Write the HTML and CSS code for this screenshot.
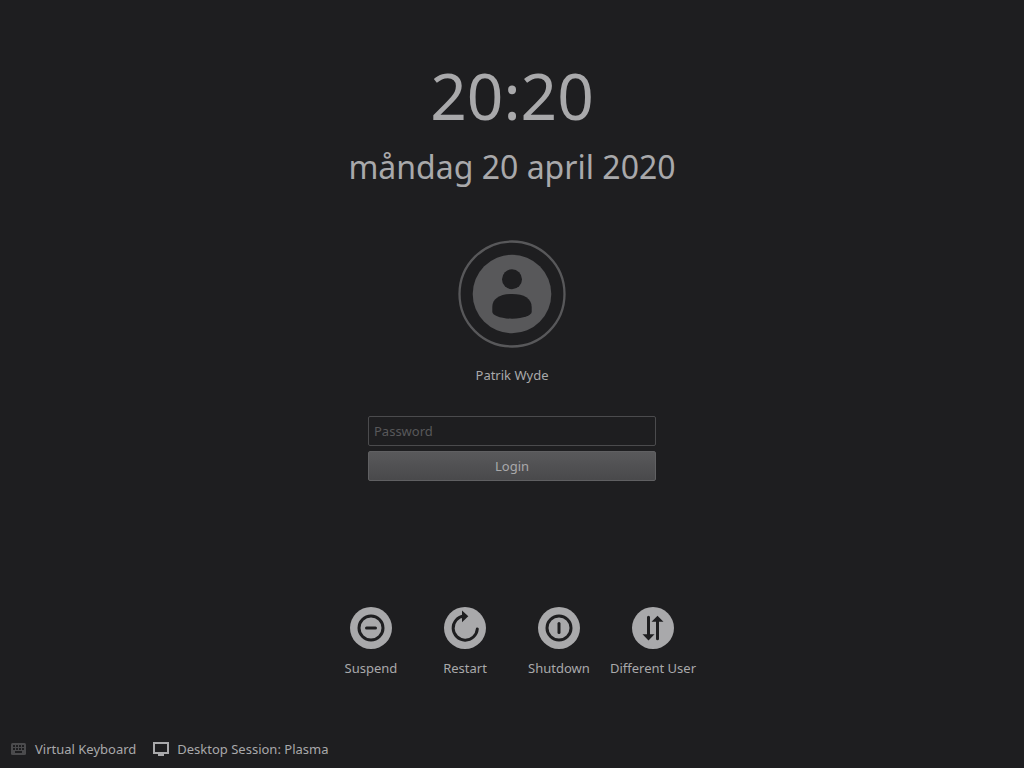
FILE: index.html
```html
<!DOCTYPE html>
<html lang="sv">
<head>
<meta charset="utf-8">
<title>Login</title>
<meta name="viewport" content="width=device-width, initial-scale=1">
<link rel="stylesheet" href="styles.css">
</head>
<body>
<div class="screen">
  <header class="clock">
    <time class="clock-time" datetime="20:20">20:20</time>
    <time class="clock-date" datetime="2020-04-20">måndag 20 april 2020</time>
  </header>

  <main class="login">
    <svg class="avatar" viewBox="0 0 108 108" aria-hidden="true">
      <circle class="avatar-ring" cx="54" cy="54" r="52.5"/>
      <circle class="avatar-disc" cx="54" cy="54" r="39.3"/>
      <circle class="cutout" cx="54" cy="39.2" r="10"/>
      <path class="cutout" d="M34.300 67C34.300 58.500 42 54 54 54s19.700 4.500 19.700 13v5c0 3-8 6.700-19.700 6.700S34.300 75 34.300 72z"/>
    </svg>
    <h1 class="user-name">Patrik Wyde</h1>
    <form class="login-form">
      <input class="password" type="password" placeholder="Password" aria-label="Password">
      <button class="submit" type="button">Login</button>
    </form>
  </main>

  <nav class="actions">
    <button class="action" type="button">
      <svg class="action-icon" viewBox="0 0 42 42" aria-hidden="true">
        <circle class="disc" cx="21" cy="21" r="21"/>
        <circle class="stroke" cx="21" cy="21" r="12"/>
        <path class="stroke round" d="M16.500 21h9"/>
      </svg>
      <span>Suspend</span>
    </button>
    <button class="action" type="button">
      <svg class="action-icon" viewBox="0 0 42 42" aria-hidden="true">
        <circle class="disc" cx="21" cy="21" r="21"/>
        <path class="stroke round" d="M20 9A12.100 12.100 0 1 0 33.300 22"/>
        <path class="cutout" d="M18 3.500L24.300 9.300 18 15.200z"/>
      </svg>
      <span>Restart</span>
    </button>
    <button class="action" type="button">
      <svg class="action-icon" viewBox="0 0 42 42" aria-hidden="true">
        <circle class="disc" cx="21" cy="21" r="21"/>
        <circle class="stroke" cx="21" cy="21" r="12"/>
        <path class="stroke round" d="M21 16.500v9"/>
      </svg>
      <span>Shutdown</span>
    </button>
    <button class="action" type="button">
      <svg class="action-icon" viewBox="0 0 42 42" aria-hidden="true">
        <circle class="disc" cx="21" cy="21" r="21"/>
        <path class="stroke round" d="M16.500 10.300V29M25.500 31.700V13"/>
        <path class="cutout" d="M10.500 27.300h12L16.500 33.500zM19.500 14.700h12L25.500 8.800z"/>
      </svg>
      <span>Different User</span>
    </button>
  </nav>

  <footer class="bottom-bar">
    <button class="bar-button" type="button">
      <svg class="bar-icon" viewBox="0 0 16 16" aria-hidden="true">
        <rect class="key-body" x="0" y="2" width="15" height="12" rx="1.500"/>
        <path class="cutout" d="M2 4h2v2H2zM5 4h2v2H5zM8 4h2v2H8zM11 4h2v2h-2zM2 7h2v2H2zM5 7h2v2H5zM8 7h2v2H8zM11 7h2v2h-2zM4 10h7v2H4z"/>
      </svg>
      <span>Virtual Keyboard</span>
    </button>
    <button class="bar-button" type="button">
      <svg class="bar-icon" viewBox="0 0 16 16" aria-hidden="true">
        <path class="disc" fill-rule="evenodd" d="M0 1h16v12h-5v2H5v-2H0zM2 3v8h12V3z"/>
      </svg>
      <span>Desktop Session: Plasma</span>
    </button>
  </footer>
</div>
</body>
</html>
```
FILE: styles.css
```css
:root {
  --bg: #1e1e20;
  --fg: #a9a9ab;
  --muted: #58585a;
  --line: #4b4b4d;
}

* {
  box-sizing: border-box;
}

body {
  margin: 0;
  background: var(--bg);
  color: var(--fg);
  font: 13px/18px "Noto Sans", sans-serif;
}

button {
  border: 0;
  padding: 0;
  background: none;
  color: inherit;
  font: inherit;
  cursor: pointer;
}

.screen {
  display: flex;
  flex-direction: column;
  align-items: center;
  min-height: 100vh;
  padding-top: 52px;
}

.clock {
  display: flex;
  flex-direction: column;
  align-items: center;
  gap: 4px;
  text-align: center;
}

.clock-time {
  font-size: 64px;
  line-height: 88px;
}

.clock-date {
  font-size: 32px;
  line-height: 46px;
}

.login {
  display: flex;
  flex-direction: column;
  align-items: center;
  width: 100%;
  margin-top: 50px;
}

.avatar {
  width: 108px;
  height: 108px;
}

.avatar-ring {
  fill: none;
  stroke: var(--muted);
  stroke-width: 2.3;
}

.avatar-disc {
  fill: var(--muted);
}

.user-name {
  margin: 18px 0 32px;
  font-size: 13px;
  font-weight: 400;
}

.login-form {
  display: flex;
  flex-direction: column;
  gap: 5px;
  width: 100%;
  max-width: 288px;
}

.password,
.submit {
  height: 30px;
  border: 1px solid var(--line);
  border-radius: 2px;
}

.password {
  padding: 0 5px;
  background: transparent;
  color: var(--fg);
  font: inherit;
}

.password::placeholder {
  color: var(--muted);
  opacity: 1;
}

.submit {
  border-color: #606062;
  background: linear-gradient(#59595b, #49494b);
}

.actions {
  display: flex;
  justify-content: center;
  margin-top: auto;
  margin-bottom: 63px;
}

.action {
  display: flex;
  flex-direction: column;
  align-items: center;
  gap: 10px;
  width: 94px;
}

.action-icon {
  width: 42px;
  height: 42px;
}

.disc {
  fill: var(--fg);
}

.cutout {
  fill: var(--bg);
}

.stroke {
  fill: none;
  stroke: var(--bg);
  stroke-width: 3;
}

.round {
  stroke-linecap: round;
}

.bottom-bar {
  display: flex;
  align-self: stretch;
  gap: 17px;
  padding: 0 11px 10px;
}

.bar-button {
  display: flex;
  align-items: center;
  gap: 8px;
}

.bar-icon {
  width: 16px;
  height: 16px;
}

.key-body {
  fill: var(--line);
}
```
